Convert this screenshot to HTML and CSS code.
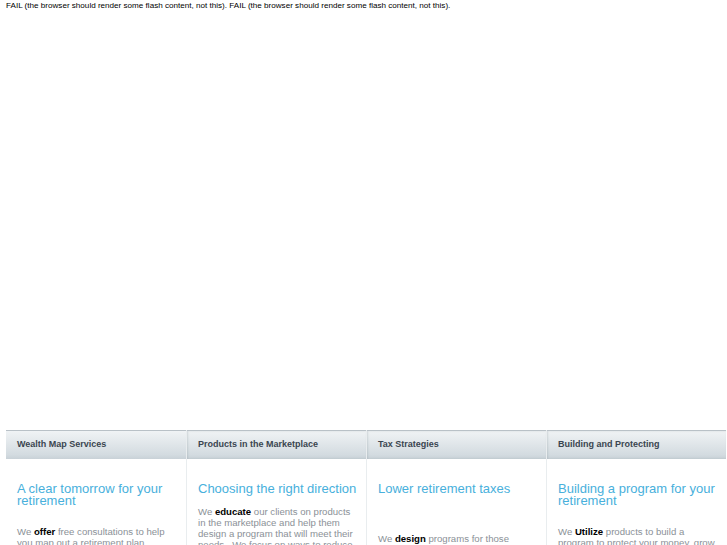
FILE: index.html
```html
<!DOCTYPE html>
<html lang="en">

<head>
    <meta charset="UTF-8">
    <meta name="viewport" content="width=device-width, initial-scale=1.0">
    <title>Wealth Map</title>
    <link rel="stylesheet" href="styles.css">
</head>

<body>

    <div class="flash">
        <p class="fail">FAIL (the browser should render some flash content, not this). FAIL (the browser should render some flash content, not this).</p>
    </div>

    <div class="services">
        <div class="service">
            <div class="tab">Wealth Map Services</div>
            <div class="panel">
                <h2 class="headline">A clear tomorrow for your retirement</h2>
                <p class="copy copy-1">We <b>offer</b> free consultations to help you map out a retirement plan.</p>
            </div>
        </div>

        <div class="service">
            <div class="tab">Products in the Marketplace</div>
            <div class="panel">
                <h2 class="headline">Choosing the right direction</h2>
                <p class="copy copy-2">We <b>educate</b> our clients on products in the marketplace and help them design a program that will meet their needs.&nbsp; We focus on ways to reduce risk.</p>
            </div>
        </div>

        <div class="service">
            <div class="tab">Tax Strategies</div>
            <div class="panel">
                <h2 class="headline">Lower retirement taxes</h2>
                <p class="copy copy-3">We <b>design</b> programs for those clients looking to lower their taxes.</p>
            </div>
        </div>

        <div class="service">
            <div class="tab">Building and Protecting</div>
            <div class="panel">
                <h2 class="headline">Building a program for your retirement</h2>
                <p class="copy copy-4">We <b>Utilize</b> products to build a program to protect your money, grow your savings.</p>
            </div>
        </div>
    </div>

</body>

</html>
```

FILE: styles.css
```css
* {
    margin: 0;
    padding: 0;
    box-sizing: border-box;
}

body {
    font-family: "Liberation Sans", Arial, sans-serif;
    background-color: #ffffff;
    overflow: hidden;
}

/* flash object area */
.flash {
    height: 430px;
    padding: 1px 6px;
}

.fail {
    font-size: 8.1px;
    line-height: 10px;
    color: #000;
}

.services {
    display: grid;
    grid-template-columns: repeat(4, 180px);
    margin-left: 6px;
}

.service {
    border-left: 1px solid #e9edef;
}

.service:first-child {
    border-left: none;
}

.tab {
    height: 29px;
    padding: 0 11px 2px;
    display: flex;
    align-items: center;
    font-size: 9px;
    font-weight: bold;
    color: #3a4550;
    border-top: 1px solid #b9c1c7;
    background: linear-gradient(to bottom, #f0f3f5, #d3dbe0 85%, #c8d1d7);
    box-shadow: inset 1px 0 2px rgba(120, 135, 145, 0.25);
}

.service:first-child .tab {
    box-shadow: none;
}

.panel {
    padding: 24px 5px 0 11px;
}

.headline {
    font-size: 13px;
    font-weight: normal;
    line-height: 12px;
    color: #48b0dc;
}

.copy {
    max-width: 158px;
    font-size: 9.6px;
    line-height: 11px;
    color: #8b9197;
}

.copy b {
    color: #000;
}

.copy-1 { margin-top: 19px; }
.copy-2 { margin-top: 11px; }
.copy-3 { margin-top: 38px; }
.copy-4 { margin-top: 19px; max-width: 166px; }
```
